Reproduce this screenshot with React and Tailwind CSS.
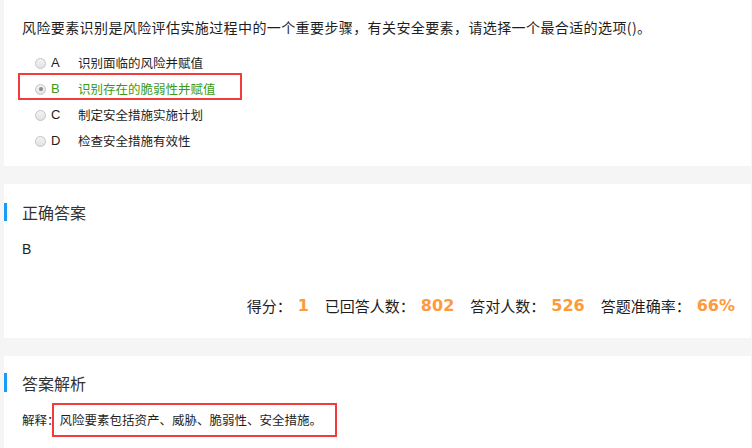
const options = [
  { key: "A", text: "识别面临的风险并赋值" },
  { key: "B", text: "识别存在的脆弱性并赋值", picked: true },
  { key: "C", text: "制定安全措施实施计划" },
  { key: "D", text: "检查安全措施有效性" },
];

const stats = [
  { label: "得分：", value: "1" },
  { label: "已回答人数：", value: "802" },
  { label: "答对人数：", value: "526" },
  { label: "答题准确率：", value: "66%" },
];

const Radio = ({ checked }) => (
  <span className="flex h-[11px] w-[11px] items-center justify-center rounded-full border border-[#c4c4c4] bg-gradient-to-b from-[#f4f4f4] to-[#e2e2e2]">
    {checked && <span className="h-[4px] w-[4px] rounded-full bg-[#8c8c8c]" />}
  </span>
);

const SectionTitle = ({ children, barHeight }) => (
  <div className="flex items-center">
    <span className={`w-[3px] bg-[#1a9cf6] ${barHeight}`} />
    <h3 className="ml-[15px] text-[16px] leading-[18px] text-[#333]">{children}</h3>
  </div>
);

export default function App() {
  return (
    <div className="flex h-[448px] w-[752px] flex-col overflow-hidden bg-[#f5f5f5] pl-1 pr-px font-['Noto_Sans_CJK_SC','Noto_Sans',sans-serif] text-[#1e1e1e]">
      {/* 题目 */}
      <div className="h-[166px] shrink-0 bg-white px-[18px] pt-[17px]">
        <p className="text-[14px] leading-5 tracking-[0.4px]">
          风险要素识别是风险评估实施过程中的一个重要步骤，有关安全要素，请选择一个最合适的选项()。
        </p>
        <div className="-ml-1 mt-[13px]">
          {options.map((opt) => (
            <div
              key={opt.key}
              className={`relative flex h-[26px] w-[224px] items-center pl-[17px] ${
                opt.picked ? "text-[#3d9a14]" : ""
              }`}
            >
              {opt.picked && (
                <span className="absolute -top-[3px] left-0 h-[27px] w-[224px] border-2 border-[#f23c3c]" />
              )}
              <Radio checked={opt.picked} />
              <span className="ml-[5px] w-[27px] font-['Liberation_Sans',sans-serif] text-[13px]">
                {opt.key}
              </span>
              <span className="text-[12.5px]">{opt.text}</span>
            </div>
          ))}
        </div>
      </div>

      {/* 正确答案 */}
      <div className="mt-[18px] h-[154px] shrink-0 bg-white pt-[19px]">
        <SectionTitle barHeight="h-[18px]">正确答案</SectionTitle>
        <p className="mt-[18px] pl-[18px] font-['Liberation_Sans',sans-serif] text-[14px] leading-5">B</p>
        <div className="mt-[35px] flex items-center justify-end pr-4 leading-6">
          {stats.map((s, i) => (
            <span key={s.label} className="flex items-center">
              <span className="text-[15px]">{s.label}</span>
              <span
                className={`ml-[6px] font-['DejaVu_Sans',sans-serif] text-[16px] font-bold text-[#fe9a3c] ${
                  i < stats.length - 1 ? "mr-4" : ""
                }`}
              >
                {s.value}
              </span>
            </span>
          ))}
        </div>
      </div>

      {/* 答案解析 */}
      <div className="mt-[18px] flex-1 bg-white pt-[17px]">
        <SectionTitle barHeight="h-[19px]">答案解析</SectionTitle>
        <div className="relative ml-[18px] mt-[11px] flex h-[34px] items-center text-[12.5px]">
          <span>解释：风险要素包括资产、威胁、脆弱性、安全措施。</span>
          <span className="absolute left-[30px] top-0 h-[34px] w-[285px] border-2 border-[#f23c3c]" />
        </div>
      </div>
    </div>
  );
}
